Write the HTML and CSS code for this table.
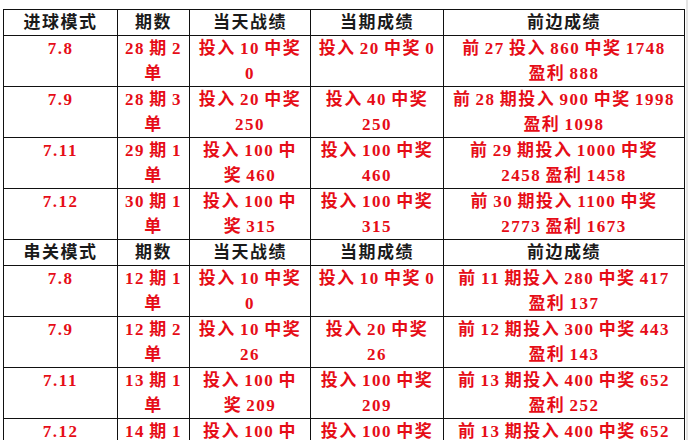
FILE: index.html
```html
<!DOCTYPE html>
<html lang="zh">
<head>
<meta charset="utf-8">
<link rel="stylesheet" href="styles.css">
</head>
<body>
<table class="score">
  <colgroup>
    <col class="c1"><col class="c2"><col class="c3"><col class="c4"><col class="c5">
  </colgroup>
  <tr class="head"><td>进球模式</td><td>期数</td><td>当天战绩</td><td>当期成绩</td><td>前边成绩</td></tr>
  <tr><td>7.8</td><td>28 期 2<br>单</td><td>投入 10 中奖<br>0</td><td>投入 20 中奖 0</td><td>前 27 投入 860 中奖 1748<br>盈利 888</td></tr>
  <tr><td>7.9</td><td>28 期 3<br>单</td><td>投入 20 中奖<br>250</td><td>投入 40 中奖<br>250</td><td>前 28 期投入 900 中奖 1998<br>盈利 1098</td></tr>
  <tr><td>7.11</td><td>29 期 1<br>单</td><td>投入 100 中<br>奖 460</td><td>投入 100 中奖<br>460</td><td>前 29 期投入 1000 中奖<br>2458 盈利 1458</td></tr>
  <tr><td>7.12</td><td>30 期 1<br>单</td><td>投入 100 中<br>奖 315</td><td>投入 100 中奖<br>315</td><td>前 30 期投入 1100 中奖<br>2773 盈利 1673</td></tr>
  <tr class="head"><td>串关模式</td><td>期数</td><td>当天战绩</td><td>当期成绩</td><td>前边成绩</td></tr>
  <tr><td>7.8</td><td>12 期 1<br>单</td><td>投入 10 中奖<br>0</td><td>投入 10 中奖 0</td><td>前 11 期投入 280 中奖 417<br>盈利 137</td></tr>
  <tr><td>7.9</td><td>12 期 2<br>单</td><td>投入 10 中奖<br>26</td><td>投入 20 中奖<br>26</td><td>前 12 期投入 300 中奖 443<br>盈利 143</td></tr>
  <tr><td>7.11</td><td>13 期 1<br>单</td><td>投入 100 中<br>奖 209</td><td>投入 100 中奖<br>209</td><td>前 13 期投入 400 中奖 652<br>盈利 252</td></tr>
  <tr><td>7.12</td><td>14 期 1<br>单</td><td>投入 100 中<br>奖 209</td><td>投入 100 中奖<br>209</td><td>前 13 期投入 400 中奖 652<br>盈利 252</td></tr>
</table>
</body>
</html>
```
FILE: styles.css
```css
html, body {
  margin: 0;
  padding: 0;
  background: #fff;
}
body {
  padding: 9px 0 0 3px;
  border-right: 2px solid #e4e4e4;
  box-sizing: border-box;
  width: 688px;
  min-height: 440px;
}
.score {
  border-collapse: collapse;
  table-layout: fixed;
  width: 682px;
  font-family: "Liberation Serif", "Noto Sans CJK SC", serif;
  font-weight: bold;
  font-size: 17px;
  letter-spacing: 1.5px;
  word-spacing: -1.5px;
  color: #e60d17;
}
.c1 { width: 114px; }
.c2 { width: 72px; }
.c3 { width: 121px; }
.c4 { width: 133px; }
.c5 { width: 241px; }
.score td {
  border: 1px solid #111;
  padding: 0;
  text-align: center;
  vertical-align: top;
  line-height: 25px;
  white-space: nowrap;
  overflow: hidden;
}
.score tr:not(.head) td {
  height: 50px;
}
.score .head td {
  color: #1a1a1a;
  height: 25px;
}
```
